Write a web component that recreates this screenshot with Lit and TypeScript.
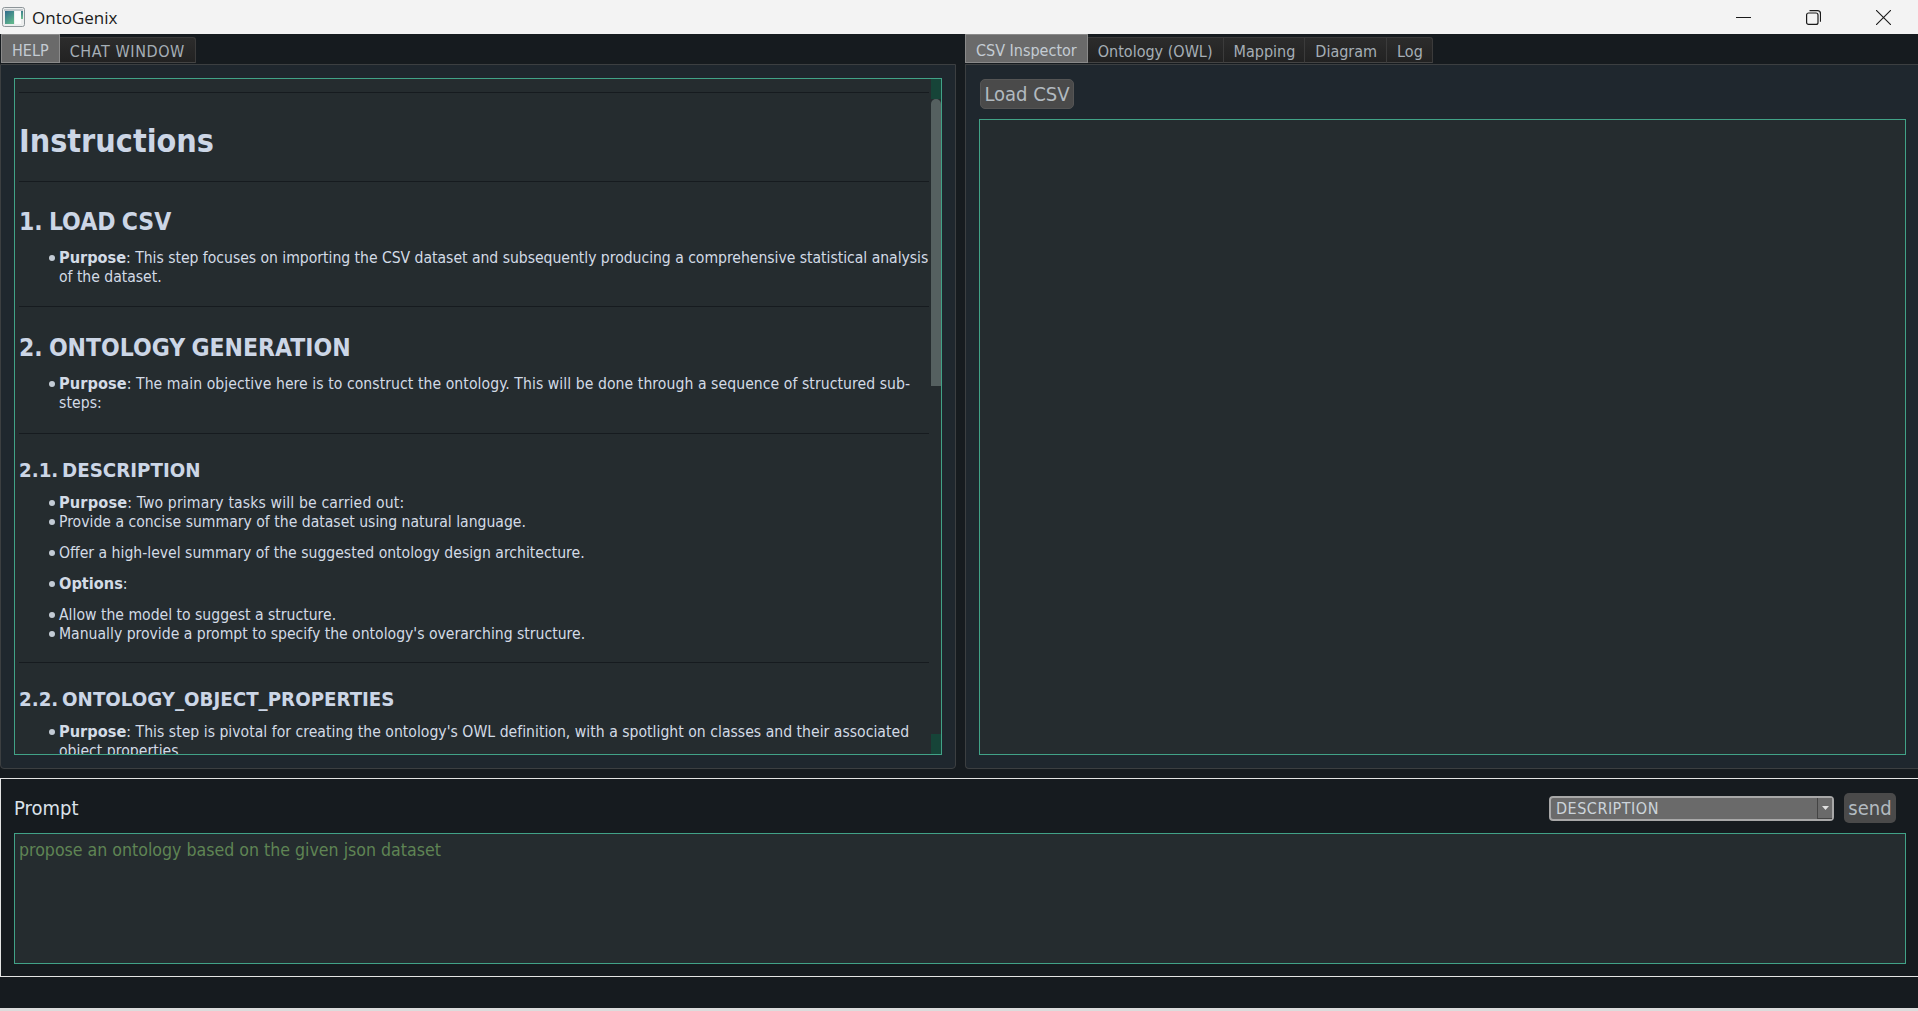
import { LitElement, css, html } from 'lit';
import { customElement } from 'lit/decorators.js';

@customElement('app-root')
export class AppRoot extends LitElement {
  static styles = css`
    :host {
      display: flex;
      flex-direction: column;
      height: 1011px;
      overflow: hidden;
      background: #161b1f;
      font-family: "DejaVu Sans", "Liberation Sans", sans-serif;
      font-stretch: condensed;
      color: #d3dbe6;
    }

    .titlebar {
      height: 34px;
      flex: none;
      display: flex;
      align-items: center;
      background: #f3f3f3;
      color: #1a1a1a;
      font-family: "Open Sans", "Noto Sans", sans-serif;
      font-stretch: normal;
      font-size: 17px;
    }
    .app-icon { margin: 0 7px 0 2px; display: block; }
    .title { flex: 1; }
    .winbtn { width: 70px; height: 34px; display: flex; align-items: center; justify-content: center; }

    .main {
      flex: none;
      height: 735px;
      display: grid;
      grid-template-columns: 956px 953px;
      grid-template-rows: minmax(0, 1fr);
      column-gap: 9px;
    }
    .side { display: flex; flex-direction: column; min-width: 0; min-height: 0; }

    .tabs { display: flex; height: 29px; align-items: flex-end; flex: none; margin-left: 1px; }
    .side.right .tabs { margin-left: 0; }
    .tab {
      height: 26px;
      box-sizing: border-box;
      padding: 2px 10px 0;
      display: flex;
      align-items: center;
      font-size: 16px;
      color: #a5aeb6;
      background: linear-gradient(#2c2c2c, #222222);
      border: 1px solid #3b3b3b;
      border-left: none;
      border-bottom-color: #444;
      white-space: nowrap;
    }
    .tab.caps { letter-spacing: 0.6px; }
    .tab.tight { padding-right: 9px; }
    .tab.last { border-top-right-radius: 3px; }
    .tab.on {
      height: 29px;
      padding-top: 3px;
      background: #6a6a6a;
      color: #c4ccd3;
      border: 1px solid #8a8a8a;
    }

    .pane {
      flex: 1;
      min-height: 0;
      margin-top: 1px;
      background: #1f272e;
      border: 1px solid #3c3f41;
      border-radius: 0 0 4px 4px;
      box-sizing: border-box;
      padding: 13px;
      display: flex;
      flex-direction: column;
    }
    .right .pane { padding: 14px 12px 13px 13px; border-right: none; border-bottom-right-radius: 0; }

    .box {
      flex: 1;
      min-height: 0;
      background: #252c2f;
      border: 1px solid #41a287;
      position: relative;
      overflow: hidden;
    }

    .doc { padding: 13px 12px 0 4px; height: 100%; box-sizing: border-box; overflow: hidden; }
    .doc hr { border: none; border-top: 1px solid #161b1f; margin: 0; }
    .doc h1, .doc h2, .doc h3 { margin: 0; font-weight: 700; color: #ccd6e6; white-space: nowrap; }
    .doc h1 { font-size: 32px; line-height: 38px; padding: 29px 0 21px; }
    .doc h2 { font-size: 24.5px; line-height: 30px; padding: 26px 0 12px; word-spacing: -1.5px; }
    .doc h2.first { padding-top: 25px; }
    .doc h3 { font-size: 20.3px; line-height: 24px; padding: 24px 0 12px; word-spacing: -2.5px; }
    .doc ul { list-style: none; margin: 0; padding: 0 0 20px; }
    .doc ul.first { padding-bottom: 19px; }
    .doc ul.short { padding-bottom: 18px; }
    .doc li {
      position: relative;
      padding-left: 40px;
      font-size: 15.6px;
      line-height: 19px;
      white-space: nowrap;
    }
    .doc li::before {
      content: "";
      position: absolute;
      left: 30px;
      top: 6px;
      width: 6px;
      height: 6px;
      border-radius: 50%;
      background: #c3cbd5;
    }
    .doc li.gap { margin-top: 12px; }
    .doc b { font-weight: 700; font-size: 16.2px; line-height: 1; }
    .doc li.narrow { letter-spacing: -0.025px; }
    .doc li.wide { letter-spacing: 0.07px; }
    .doc li.wider { letter-spacing: 0.15px; }
    .doc li.slack { letter-spacing: 0.02px; }

    .scroll { position: absolute; top: 0; right: 0; bottom: 0; width: 10px; display: flex; flex-direction: column; }
    .scroll i { display: block; flex: none; }
    .scroll .sb-end { height: 20px; background: #164438; }
    .scroll .sb-thumb { height: 287px; background: #556060; border-radius: 5px 5px 0 0; }
    .scroll .sb-gap { flex: 1; }

    .load {
      align-self: flex-start;
      height: 30px;
      width: 94px;
      margin: 0 0 10px 1px;
      box-sizing: border-box;
      display: flex;
      align-items: center;
      justify-content: center;
      background: #4a4a4a;
      border: 1px solid #555;
      border-radius: 5px;
      color: #b2bac0;
      font-size: 20px;
      white-space: nowrap;
    }

    .bottom {
      flex: none;
      margin-top: 9px;
      height: 199px;
      box-sizing: border-box;
      border: 1px solid #e4e4e4;
      border-right: none;
      padding: 14px 12px 12px 13px;
      display: flex;
      flex-direction: column;
    }
    .prompt-head { display: flex; align-items: center; height: 30px; margin-bottom: 10px; }
    .prompt-label { flex: 1; font-size: 20px; color: #dbe2ea; }
    .select {
      width: 285px;
      height: 25px;
      box-sizing: border-box;
      background: #6a6a6a;
      border: 2px solid #a8a8a8;
      border-radius: 4px;
      display: flex;
      align-items: center;
      padding-left: 5px;
      font-size: 16px;
      letter-spacing: 0.5px;
      color: #ccd4da;
    }
    .select .v { flex: 1; }
    .select .arrow {
      width: 15px;
      height: 21px;
      box-sizing: border-box;
      background: #6a6a6a;
      border-left: 1px solid #444;
      border-bottom: 1px solid #444;
      display: flex;
      align-items: center;
      justify-content: center;
    }
    .send {
      margin: 0 10px;
      width: 52px;
      height: 30px;
      box-sizing: border-box;
      background: #4a4a4a;
      border-radius: 5px;
      display: flex;
      align-items: center;
      justify-content: center;
      color: #b2bac0;
      font-size: 20px;
    }
    .input {
      flex: 1;
      background: #252c2f;
      border: 1px solid #41a287;
      padding: 5px 4px;
      font-size: 17.6px;
      line-height: 22px;
      color: #5f8454;
    }

    .foot { flex: 1; }
    .edge { height: 3px; flex: none; background: #dcdcdc; }
  `;

  render() {
    return html`
      <div class="titlebar">
        <svg class="app-icon" width="23" height="20" viewBox="0 0 23 20">
          <defs>
            <linearGradient id="g" x1="0" y1="0" x2="0.6" y2="1">
              <stop offset="0" stop-color="#2f6a8c" />
              <stop offset="1" stop-color="#5fb48c" />
            </linearGradient>
            <linearGradient id="h" x1="0" y1="0" x2="0" y2="1">
              <stop offset="0" stop-color="#3b7f8c" />
              <stop offset="1" stop-color="#6fbf8f" />
            </linearGradient>
          </defs>
          <rect x="0.5" y="0.5" width="22" height="19" rx="2" fill="#eceeee" stroke="#8d9599" />
          <rect x="2" y="2" width="19" height="2" fill="#c3c9cc" />
          <rect x="3" y="4" width="9" height="13" fill="url(#g)" />
          <rect x="13" y="4" width="6" height="13" fill="#fbfbfb" />
          <rect x="19" y="4" width="2" height="8" fill="url(#h)" />
        </svg>
        <span class="title">OntoGenix</span>
        <div class="winbtn">
          <svg width="15" height="15" viewBox="0 0 15 15"><path d="M0 7.5h15" stroke="#1a1a1a" fill="none" /></svg>
        </div>
        <div class="winbtn">
          <svg width="15" height="15" viewBox="0 0 15 15" fill="none" stroke="#1a1a1a" stroke-width="1.2">
            <rect x="0.6" y="3" width="11.4" height="11.4" rx="2" />
            <path d="M3.5 0.7h8a3 3 0 0 1 3 3v8" />
          </svg>
        </div>
        <div class="winbtn">
          <svg width="15" height="15" viewBox="0 0 15 15"><path d="M0 0l15 15M15 0L0 15" stroke="#1a1a1a" stroke-width="1.1" fill="none" /></svg>
        </div>
      </div>

      <div class="main">
        <div class="side">
          <div class="tabs">
            <div class="tab on">HELP</div>
            <div class="tab caps last">CHAT WINDOW</div>
          </div>
          <div class="pane">
            <div class="box">
              <div class="doc">
                <hr />
                <h1>Instructions</h1>
                <hr />
                <h2 class="first">1. LOAD CSV</h2>
                <ul class="first">
                  <li class="narrow"><b>Purpose</b>: This step focuses on importing the CSV dataset and subsequently producing a comprehensive statistical analysis<br />of the dataset.</li>
                </ul>
                <hr />
                <h2>2. ONTOLOGY GENERATION</h2>
                <ul>
                  <li class="wide"><b>Purpose</b>: The main objective here is to construct the ontology. This will be done through a sequence of structured sub-<br />steps:</li>
                </ul>
                <hr />
                <h3>2.1. DESCRIPTION</h3>
                <ul class="short">
                  <li class="wider"><b>Purpose</b>: Two primary tasks will be carried out:</li>
                  <li>Provide a concise summary of the dataset using natural language.</li>
                  <li class="gap">Offer a high-level summary of the suggested ontology design architecture.</li>
                  <li class="gap"><b>Options</b>:</li>
                  <li class="gap">Allow the model to suggest a structure.</li>
                  <li>Manually provide a prompt to specify the ontology's overarching structure.</li>
                </ul>
                <hr />
                <h3>2.2. ONTOLOGY_OBJECT_PROPERTIES</h3>
                <ul>
                  <li class="slack"><b>Purpose</b>: This step is pivotal for creating the ontology's OWL definition, with a spotlight on classes and their associated<br />object properties.</li>
                </ul>
              </div>
              <div class="scroll">
                <i class="sb-end"></i>
                <i class="sb-thumb"></i>
                <i class="sb-gap"></i>
                <i class="sb-end"></i>
              </div>
            </div>
          </div>
        </div>

        <div class="side right">
          <div class="tabs">
            <div class="tab on">CSV Inspector</div>
            <div class="tab">Ontology (OWL)</div>
            <div class="tab tight">Mapping</div>
            <div class="tab tight">Diagram</div>
            <div class="tab tight last">Log</div>
          </div>
          <div class="pane">
            <div class="load">Load CSV</div>
            <div class="box"></div>
          </div>
        </div>
      </div>

      <div class="bottom">
        <div class="prompt-head">
          <span class="prompt-label">Prompt</span>
          <div class="select">
            <span class="v">DESCRIPTION</span>
            <span class="arrow">
              <svg width="7" height="4" viewBox="0 0 7 4"><path d="M0 0h7L3.5 4z" fill="#e0e0e0" /></svg>
            </span>
          </div>
          <div class="send">send</div>
        </div>
        <div class="input">propose an ontology based on the given json dataset</div>
      </div>
      <div class="foot"></div>
      <div class="edge"></div>
    `;
  }
}
